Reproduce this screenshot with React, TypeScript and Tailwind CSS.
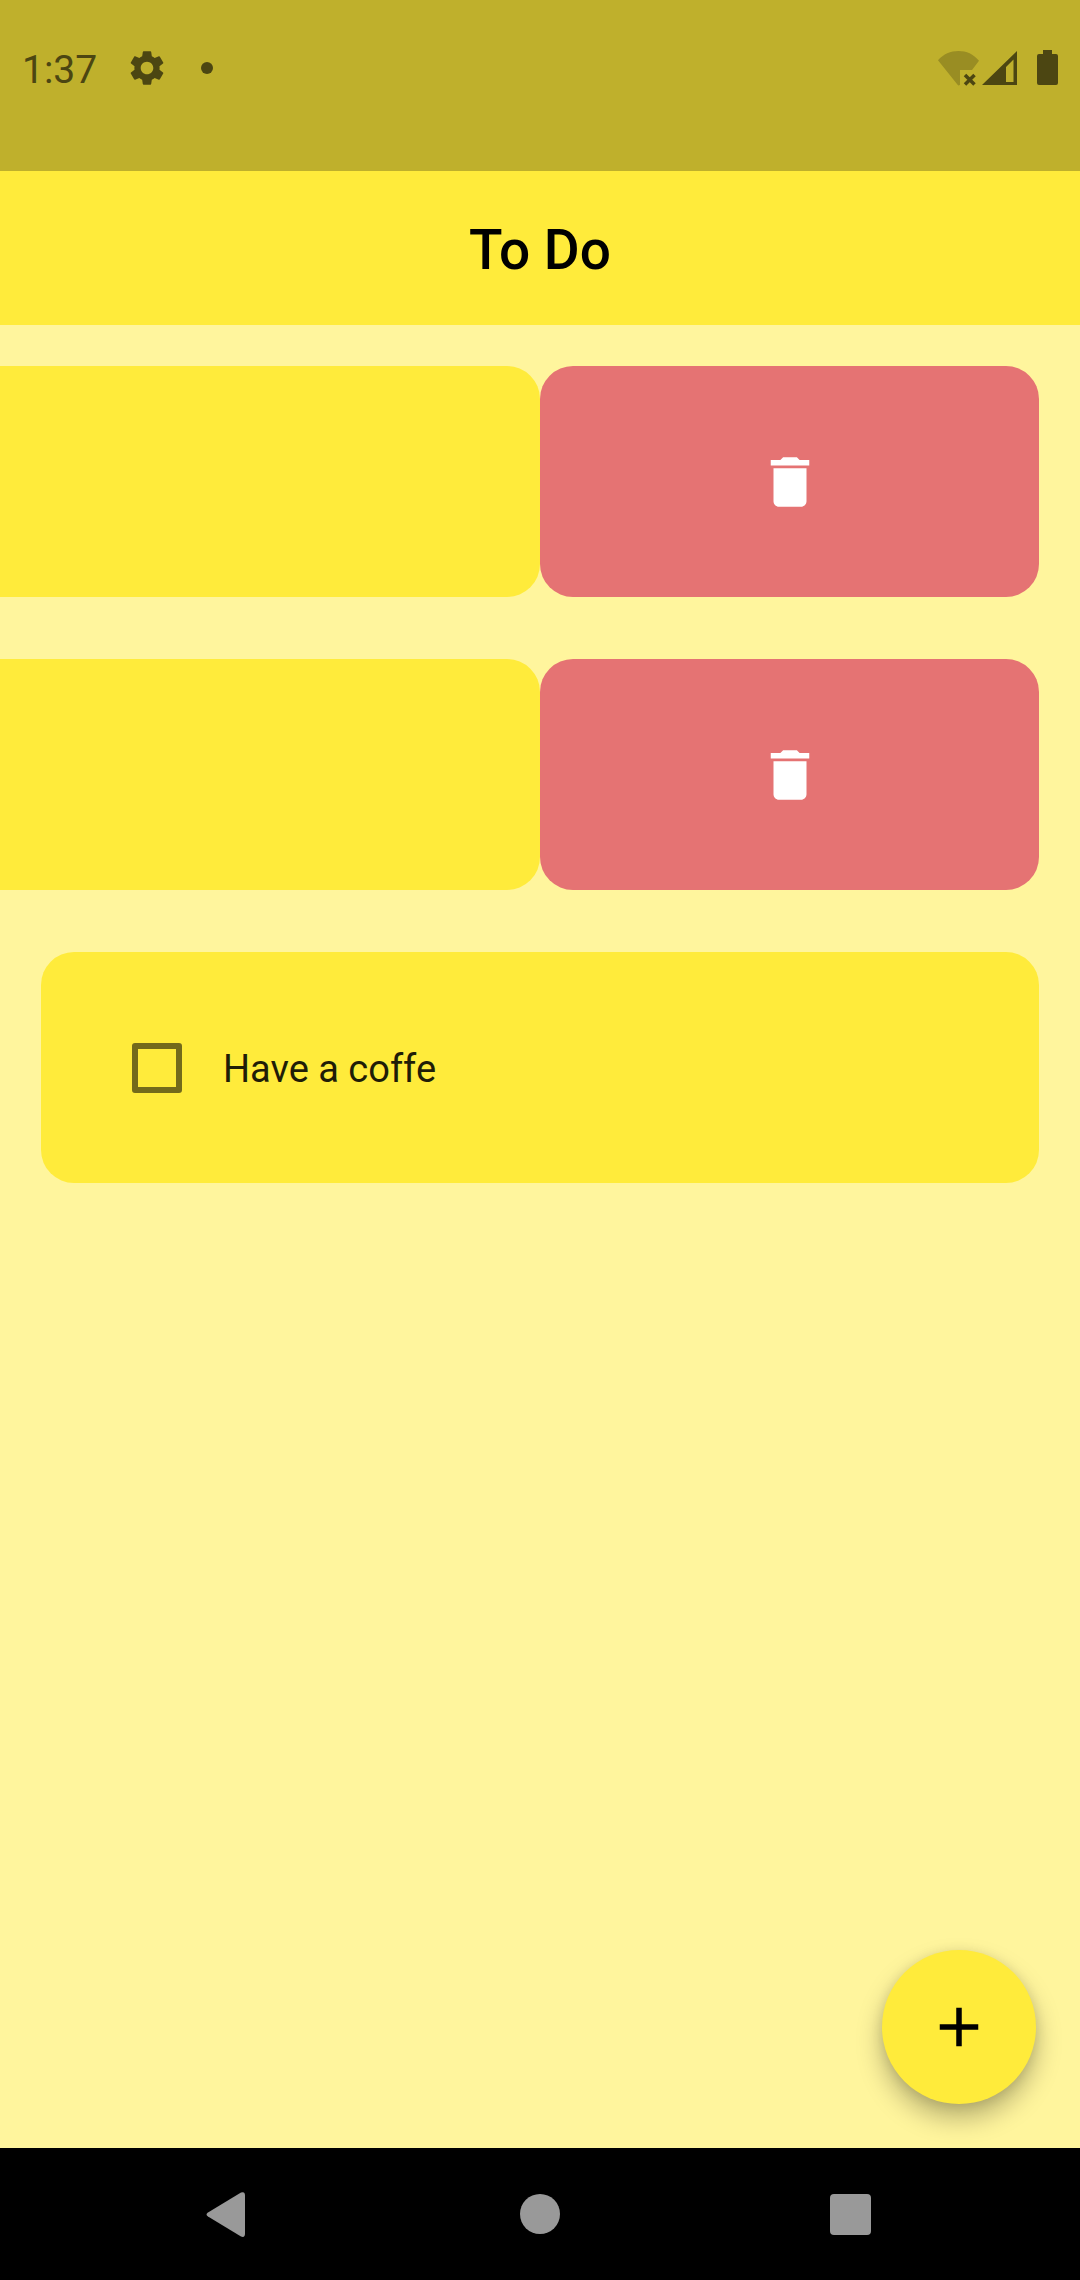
import { useState } from "react";
import { MdAdd, MdDelete, MdSettings } from "react-icons/md";

type Todo = { id: number; title: string; swiped: boolean };

const initialTodos: Todo[] = [
  { id: 1, title: "First task", swiped: true },
  { id: 2, title: "Second task", swiped: true },
  { id: 3, title: "Have a coffe", swiped: false },
];

function StatusBar() {
  return (
    <div className="flex h-[171px] items-start justify-between bg-[#bfb02c] px-[22px] pt-[44px] text-[#4c4612]">
      <div className="flex h-12 items-center">
        <span className="pt-1 text-[39px] leading-none">1:37</span>
        <MdSettings className="ml-[29px] size-[42px]" />
        <span className="ml-[33px] size-3 rounded-full bg-[#4c4612]" />
      </div>
      <div className="flex h-12 items-center">
        <svg className="h-[36px] w-[42px]" viewBox="0 0 42 36">
          <path
            d="M0 10.3C5.5 4 12.5 1 20.5 1S35.5 4 41 10.8L34 20H22v14.8q-1.5 1.5-2.6-.3z"
            fill="#998d23"
          />
          <path d="M27 25l9.500 9.500M36.500 25L27 34.500" stroke="currentColor" strokeWidth="3.5" />
        </svg>
        <svg className="ml-[2px] h-[36px] w-[35px]" viewBox="0 0 35 36">
          <path
            d="M35 1v34H0zM24 17v15h7.500V9.500z"
            fill="currentColor"
            fillRule="evenodd"
          />
        </svg>
        <svg className="ml-[20px] h-[36px] w-[21px]" viewBox="0 0 21 36">
          <path
            d="M6 0h9v4h4a2 2 0 0 1 2 2v27a2 2 0 0 1-2 2H2a2 2 0 0 1-2-2V6a2 2 0 0 1 2-2h4z"
            fill="currentColor"
          />
        </svg>
      </div>
    </div>
  );
}

function NavBar() {
  const button = "flex flex-1 items-center justify-center";
  return (
    <nav className="flex h-[132px] bg-black px-[72px] text-[#999999]">
      <button type="button" aria-label="Back" className={button}>
        <svg className="size-[66px]" viewBox="0 0 66 66" fill="currentColor">
          <path d="M13 31.500L46 11.500q4-1.500 4 3v38q0 4.500-4 3L13 35.500q-3-2 0-4z" />
        </svg>
      </button>
      <button type="button" aria-label="Home" className={button}>
        <svg className="size-[66px]" viewBox="0 0 66 66" fill="currentColor">
          <circle cx="33" cy="33" r="20" />
        </svg>
      </button>
      <button type="button" aria-label="Recent apps" className={button}>
        <svg className="size-[66px]" viewBox="0 0 66 66" fill="currentColor">
          <rect x="11" y="13" width="41" height="41" rx="4" />
        </svg>
      </button>
    </nav>
  );
}

function SwipedItem({ todo, onDelete }: { todo: Todo; onDelete: () => void }) {
  return (
    <li className="grid h-[231px] grid-cols-2">
      <div className="rounded-r-[33px] bg-[#ffeb3b]" />
      <button
        type="button"
        aria-label={`Delete ${todo.title}`}
        onClick={onDelete}
        className="mr-[41px] flex items-center justify-center rounded-[33px] bg-[#e57373] text-white"
      >
        <MdDelete className="size-[66px]" />
      </button>
    </li>
  );
}

function TodoItem({ todo }: { todo: Todo }) {
  return (
    <li className="mx-[41px]">
      <label className="flex h-[231px] items-center rounded-[33px] bg-[#ffeb3b] pl-[91px]">
        <input
          type="checkbox"
          className="size-[50px] appearance-none rounded-[3px] border-[6px] border-[#736a1b] checked:bg-[#736a1b]"
        />
        <span className="ml-[41px] pt-0.5 text-[38px] leading-none text-[#1f1d07]">{todo.title}</span>
      </label>
    </li>
  );
}

export default function App() {
  const [todos, setTodos] = useState(initialTodos);

  return (
    <div className="flex min-h-screen flex-col bg-[#fff59d] font-['Roboto',sans-serif]">
      <StatusBar />
      <header className="flex h-[154px] items-center justify-center bg-[#ffeb3b]">
        <h1 className="pt-1 text-[55px] leading-none font-medium text-black">To Do</h1>
      </header>
      <main className="relative flex-1">
        <ul className="flex flex-col gap-[62px] pt-[41px]">
          {todos.map((todo) =>
            todo.swiped ? (
              <SwipedItem
                key={todo.id}
                todo={todo}
                onDelete={() => setTodos(todos.filter((t) => t.id !== todo.id))}
              />
            ) : (
              <TodoItem key={todo.id} todo={todo} />
            ),
          )}
        </ul>
        <button
          type="button"
          aria-label="Add task"
          className="absolute right-[44px] bottom-[44px] flex size-[154px] items-center justify-center rounded-full bg-[#ffeb3b] text-black shadow-[0_14px_26px_0_rgba(0,0,0,0.28),0_2px_12px_0_rgba(0,0,0,0.1)]"
        >
          <MdAdd className="size-[66px]" />
        </button>
      </main>
      <NavBar />
    </div>
  );
}
